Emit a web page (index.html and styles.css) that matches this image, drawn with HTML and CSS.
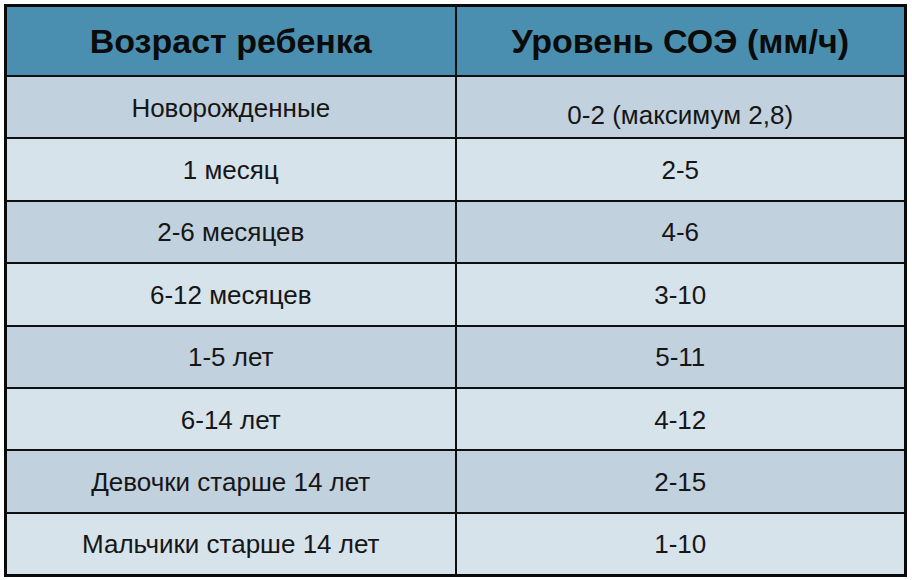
FILE: index.html
```html
<!DOCTYPE html>
<html lang="ru">
<head>
<meta charset="utf-8">
<title>СОЭ у детей</title>
<link rel="stylesheet" href="styles.css">
</head>
<body>
<div class="frame">
<table class="esr">
  <thead>
    <tr><th>Возраст ребенка</th><th>Уровень СОЭ (мм/ч)</th></tr>
  </thead>
  <tbody>
    <tr class="dark"><td>Новорожденные</td><td class="low">0-2 (максимум 2,8)</td></tr>
    <tr class="light"><td>1 месяц</td><td>2-5</td></tr>
    <tr class="dark"><td>2-6 месяцев</td><td>4-6</td></tr>
    <tr class="light"><td>6-12 месяцев</td><td>3-10</td></tr>
    <tr class="dark"><td>1-5 лет</td><td>5-11</td></tr>
    <tr class="light"><td>6-14 лет</td><td>4-12</td></tr>
    <tr class="dark"><td>Девочки старше 14 лет</td><td>2-15</td></tr>
    <tr class="light"><td>Мальчики старше 14 лет</td><td>1-10</td></tr>
  </tbody>
</table>
</div>
</body>
</html>
```
FILE: styles.css
```css
html, body {
  margin: 0;
  padding: 0;
  background: #ffffff;
}
.frame {
  padding: 4px 5px 4px 4px;
}
.esr {
  width: 903px;
  border-collapse: collapse;
  table-layout: fixed;
  border: 3px solid #0a0a0a;
  font-family: "Liberation Sans", Arial, sans-serif;
  color: #161616;
}
.esr th, .esr td {
  border: 2px solid #0f0f0f;
  text-align: center;
  vertical-align: middle;
  padding: 0;
}
.esr th {
  background: #4a8fb0;
  font-size: 34px;
  font-weight: bold;
  color: #0b0b0b;
  height: 68px;
}
.esr td {
  font-size: 26px;
  height: 58.4px;
  padding-top: 2px;
}
.esr tr.dark td {
  background: #c2d1de;
}
.esr tr.light td {
  background: #d6e3eb;
}
.esr td.low {
  height: auto;
  padding-top: 17px;
}
```
